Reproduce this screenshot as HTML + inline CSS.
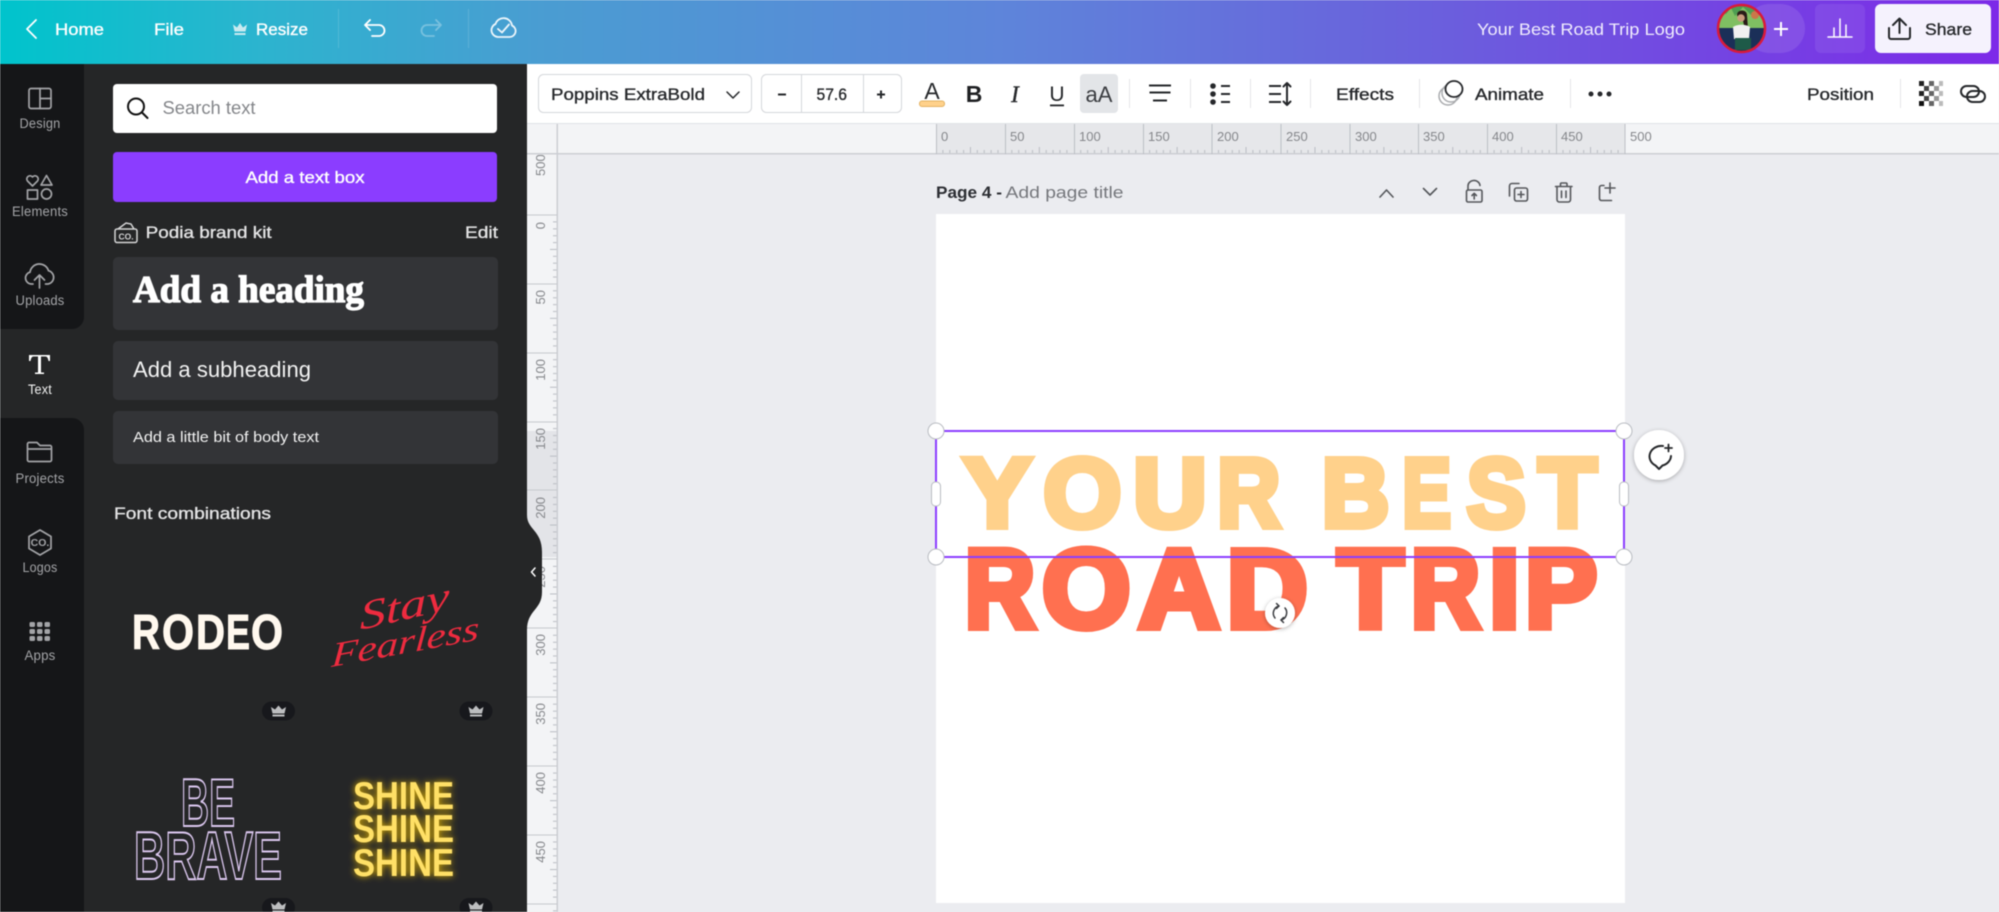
<!DOCTYPE html>
<html lang="en">
<head>
<meta charset="utf-8">
<title>Your Best Road Trip Logo</title>
<style>
html,body{margin:0;padding:0;background:#ebecf0;overflow:hidden;width:1999px;height:912px}
svg{display:block;filter:blur(.45px)}
text{font-family:"Liberation Sans",sans-serif}
.m{stroke-width:.35px;stroke:currentColor}
.wt{fill:#fff;color:#fff}
.rl{fill:#a3a4a7;font-size:13.5px;text-anchor:middle;letter-spacing:.2px}
.dk{fill:#26282b;color:#26282b;font-size:17px}
.ru{fill:#85878b;font-size:13px}
.ic{fill:none;stroke:#a3a4a7;stroke-width:1.7;stroke-linecap:round;stroke-linejoin:round}
.bk{fill:none;stroke:#26282b;stroke-width:2;stroke-linecap:round;stroke-linejoin:round}
.gy{fill:none;stroke:#55575b;stroke-width:1.6;stroke-linecap:round;stroke-linejoin:round}
.wl{fill:none;stroke:#fff;stroke-width:1.8;stroke-linecap:round;stroke-linejoin:round}
.y{fill:#ffd18b;stroke:#ffd18b;stroke-width:7;font-size:97.4px;font-weight:700;stroke-linejoin:miter}
.r{fill:#ff7050;stroke:#ff7050;stroke-width:8;font-size:110.5px;font-weight:700;stroke-linejoin:miter}
.sh{fill:#ffe066;font-size:39px;font-weight:700;filter:url(#glow)}
.ro{fill:#fff8ee;stroke:#fff8ee;stroke-width:1;font-size:49px;font-weight:700}
.so{font-family:"Liberation Serif",serif;font-style:italic;fill:#ee2b3f}
.bb{fill:none;stroke:#dcc8f0;stroke-width:1.9;font-size:68px;font-weight:700}
</style>
</head>
<body>
<svg width="1999" height="912" viewBox="0 0 1999 912" xmlns="http://www.w3.org/2000/svg">
<defs>
<linearGradient id="tg" gradientUnits="userSpaceOnUse" x1="0" y1="40" x2="1999" y2="70">
<stop offset="0" stop-color="#00c4cc"/><stop offset=".13" stop-color="#2cb4cf"/><stop offset=".27" stop-color="#4a9dd2"/><stop offset=".5" stop-color="#5e85da"/><stop offset=".72" stop-color="#6b5fdd"/><stop offset="1" stop-color="#7d2ae8"/>
</linearGradient>
<pattern id="hticks" x="936" y="124" width="68.9" height="30" patternUnits="userSpaceOnUse">
<g stroke="#b9bcc2" stroke-width="1">
<path d="M6.9 26V30M13.8 26V30M20.7 26V30M27.6 26V30M34.45 23V30M41.3 26V30M48.2 26V30M55.1 26V30M62 26V30"/>
</g>
</pattern>
<pattern id="vticks" x="527" y="215" width="30" height="68.9" patternUnits="userSpaceOnUse">
<g stroke="#b9bcc2" stroke-width="1">
<path d="M26 6.9H30M26 13.8H30M26 20.7H30M26 27.6H30M23 34.45H30M26 41.3H30M26 48.2H30M26 55.1H30M26 62H30"/>
</g>
</pattern>
<filter id="glow" x="-30%" y="-40%" width="160%" height="180%">
<feGaussianBlur stdDeviation="3.5" result="b"/>
<feFlood flood-color="#e8b800"/><feComposite in2="b" operator="in" result="c"/>
<feMerge><feMergeNode in="c"/><feMergeNode in="SourceGraphic"/></feMerge>
</filter>
<filter id="sd" x="-40%" y="-40%" width="180%" height="180%"><feDropShadow dx="0" dy="1" stdDeviation="2" flood-color="#000" flood-opacity=".3"/></filter>
<clipPath id="av"><circle cx="1741.500" cy="28.500" r="23"/></clipPath>
<clipPath id="vr"><rect x="527" y="155" width="30" height="757"/></clipPath>
<g id="crown"><path d="M-6 2.500L-7.500 -4L-3.500 -1.500L0 -5.500L3.500 -1.500L7.500 -4L6 2.500Z" fill="#bdbec0"/><rect x="-6" y="3.500" width="12" height="2" fill="#bdbec0"/></g>
</defs>

<!-- canvas background -->
<rect width="1999" height="912" fill="#ebecf0"/>

<!-- toolbar -->
<rect x="527" y="64" width="1472" height="60" fill="#fff"/>
<rect x="527" y="123" width="1472" height="1.500" fill="#e1e3e7"/>

<!-- rulers -->
<rect x="527" y="124" width="1472" height="30" fill="#f3f4f6"/>
<rect x="936" y="124" width="689" height="30" fill="#e6e7ea"/>
<rect x="936" y="124" width="689" height="30" fill="url(#hticks)"/>
<rect x="527" y="154" width="30" height="758" fill="#f3f4f6"/>
<rect x="527" y="431" width="30" height="126" fill="#e3e4e8"/>
<rect x="527" y="215" width="30" height="697" fill="url(#vticks)"/>
<rect x="527" y="153" width="1472" height="1.500" fill="#ccced3"/>
<rect x="556.500" y="124" width="1.500" height="788" fill="#ccced3"/>
<path stroke="#bcbfc5" stroke-width="1" d="M936.500 124V154M1005.500 124V154M1074.500 124V154M1143.500 124V154M1212 124V154M1281 124V154M1350 124V154M1418.500 124V154M1487.500 124V154M1556.500 124V154M1625 124V154"/>
<path stroke="#c6c8cd" stroke-width="1" d="M527 215H557M527 284H557M527 353H557M527 422H557M527 490H557M527 559H557M527 628H557M527 697H557M527 766H557M527 835H557M527 904H557"/>
<g class="ru">
<text class="ru" x="941" y="141">0</text><text class="ru" x="1010" y="141">50</text><text class="ru" x="1079" y="141">100</text><text class="ru" x="1148" y="141">150</text><text class="ru" x="1217" y="141">200</text><text class="ru" x="1286" y="141">250</text><text class="ru" x="1355" y="141">300</text><text class="ru" x="1423" y="141">350</text><text class="ru" x="1492" y="141">400</text><text class="ru" x="1561" y="141">450</text><text class="ru" x="1630" y="141">500</text>
</g>
<g clip-path="url(#vr)">
<text class="ru" transform="translate(545,176) rotate(-90)">500</text>
<text class="ru" text-anchor="end" transform="translate(545,222) rotate(-90)">0</text>
<text class="ru" text-anchor="end" transform="translate(545,290) rotate(-90)">50</text>
<text class="ru" text-anchor="end" transform="translate(545,359) rotate(-90)">100</text>
<text class="ru" text-anchor="end" transform="translate(545,428) rotate(-90)">150</text>
<text class="ru" text-anchor="end" transform="translate(545,497) rotate(-90)">200</text>
<text class="ru" text-anchor="end" transform="translate(545,566) rotate(-90)">250</text>
<text class="ru" text-anchor="end" transform="translate(545,634) rotate(-90)">300</text>
<text class="ru" text-anchor="end" transform="translate(545,703) rotate(-90)">350</text>
<text class="ru" text-anchor="end" transform="translate(545,772) rotate(-90)">400</text>
<text class="ru" text-anchor="end" transform="translate(545,841) rotate(-90)">450</text>
</g>

<!-- page -->
<rect x="936" y="214" width="689" height="689" fill="#fff"/>
<text x="936" y="198" font-size="17" font-weight="700" fill="#2c2e33" textLength="66" lengthAdjust="spacingAndGlyphs">Page 4 -</text>
<text x="1005.500" y="198" font-size="17" fill="#75777c" textLength="118" lengthAdjust="spacingAndGlyphs">Add page title</text>

<!-- page header icons -->
<path class="gy" d="M1380 197l6.500-7 6.500 7M1423.500 188.500l6.500 6.500 6.500-6.500"/>
<g class="gy">
<rect x="1466.500" y="190" width="15.500" height="12" rx="1.500"/>
<path d="M1468 190v-3.500a6 5.500 0 0 1 12-1"/><path d="M1474.200 199v-5.500M1472 195.500l2.200-2.200 2.200 2.200"/>
<rect x="1514.500" y="188" width="13" height="13" rx="2"/><path d="M1519 183.500h-7a2.500 2.500 0 0 0-2.500 2.500v10M1518 194.500h6M1521 191.500v6"/>
<path d="M1555.500 186.500h16.500M1560.500 186v-2a1 1 0 0 1 1-1h4.500a1 1 0 0 1 1 1v2M1557 186.500v13a2.500 2.500 0 0 0 2.500 2.500h8.500a2.500 2.500 0 0 0 2.500-2.500v-13M1561.500 191v6.500M1566 191v6.500"/>
<path d="M1604 185.500h-2.500a2 2 0 0 0-2 2v11a2 2 0 0 0 2 2h10"/><path d="M1610 183v10M1605 188h10"/>
</g>

<!-- canvas text -->
<g class="y">
<text class="y" x="963.500" y="526.500" textLength="67.700" lengthAdjust="spacingAndGlyphs">Y</text>
<text class="y" x="1043.500" y="526.500" textLength="77.800" lengthAdjust="spacingAndGlyphs">O</text>
<text class="y" x="1133.300" y="526.500" textLength="73.500" lengthAdjust="spacingAndGlyphs">U</text>
<text class="y" x="1217.300" y="526.500" textLength="63" lengthAdjust="spacingAndGlyphs">R</text>
<text class="y" x="1321.900" y="526.500" textLength="67.400" lengthAdjust="spacingAndGlyphs">B</text>
<text class="y" x="1402.400" y="526.500" textLength="48.600" lengthAdjust="spacingAndGlyphs">E</text>
<text class="y" x="1466.900" y="526.500" textLength="58.700" lengthAdjust="spacingAndGlyphs">S</text>
<text class="y" x="1538.600" y="526.500" textLength="57.900" lengthAdjust="spacingAndGlyphs">T</text>
</g>
<g class="r">
<text class="r" x="965" y="627" textLength="69.900" lengthAdjust="spacingAndGlyphs">R</text>
<text class="r" x="1042.400" y="627" textLength="87.900" lengthAdjust="spacingAndGlyphs">O</text>
<text class="r" x="1139" y="627" textLength="80.200" lengthAdjust="spacingAndGlyphs">A</text>
<text class="r" x="1227" y="627" textLength="80.400" lengthAdjust="spacingAndGlyphs">D</text>
<text class="r" x="1337.800" y="627" textLength="65.400" lengthAdjust="spacingAndGlyphs">T</text>
<text class="r" x="1411.100" y="627" textLength="68.700" lengthAdjust="spacingAndGlyphs">R</text>
<text class="r" x="1489.500" y="627" textLength="29.800" lengthAdjust="spacingAndGlyphs">I</text>
<text class="r" x="1525.200" y="627" textLength="71.600" lengthAdjust="spacingAndGlyphs">P</text>
</g>

<!-- selection -->
<rect x="936" y="431" width="688" height="126" fill="none" stroke="#8b3dff" stroke-width="2"/>
<g fill="#fff" stroke="#b9bcc2" stroke-width="1">
<circle cx="936" cy="431" r="8"/><circle cx="1624" cy="431" r="8"/><circle cx="936" cy="557" r="8"/><circle cx="1624" cy="557" r="8"/>
<rect x="931.500" y="482" width="9" height="24" rx="4"/><rect x="1619.500" y="482" width="9" height="24" rx="4"/>
</g>
<circle cx="1280" cy="613" r="15" fill="#fff" filter="url(#sd)"/>
<g fill="none" stroke="#3a3c40" stroke-width="1.500" stroke-linecap="round" stroke-linejoin="round">
<path d="M1275 618a7.500 7.500 0 0 1 4-12"/><path d="M1276.500 603.500l2.500 2.500-2.500 2.500"/>
<path d="M1285 608a7.500 7.500 0 0 1-4 12"/><path d="M1283.500 622.500l-2.500-2.500 2.500-2.500"/>
</g>
<circle cx="1659" cy="455" r="25" fill="#fff" filter="url(#sd)"/>
<path d="M1663 446A12 10.500 0 0 0 1655.500 465.500l3.500 3.500 3.500-3.500A12 10.500 0 0 0 1671 456" fill="none" stroke="#26282b" stroke-width="2" stroke-linecap="round" stroke-linejoin="round"/>
<path d="M1665 448h7M1668.500 444.500v7" stroke="#26282b" stroke-width="1.800" stroke-linecap="round"/>

<!-- toolbar controls -->
<rect x="538.500" y="74.500" width="213" height="38" rx="5" fill="#fff" stroke="#d5d7db"/>
<text class="dk m" x="551" y="100" textLength="154" lengthAdjust="spacingAndGlyphs">Poppins ExtraBold</text>
<path class="bk" style="stroke-width:1.500" d="M727 92l6 6 6-6"/>
<rect x="761.500" y="74.500" width="140" height="38" rx="5" fill="#fff" stroke="#d5d7db"/>
<path stroke="#d5d7db" d="M801.500 75V112M863.500 75V112"/>
<path d="M778 94.500h8M877 94.500h8M881 90.500v8" stroke="#26282b" stroke-width="2"/>
<text class="dk m" x="816.500" y="100" textLength="30.500" lengthAdjust="spacingAndGlyphs">57.6</text>

<text x="932" y="99" text-anchor="middle" font-size="23" fill="#26282b">A</text>
<rect x="919.500" y="101" width="25" height="5.500" rx="2.500" fill="#ffd18b" stroke="#e3b160" stroke-width="1"/>
<text x="974" y="102" text-anchor="middle" font-size="23" font-weight="700" fill="#1f2023">B</text>
<text x="1015" y="102" text-anchor="middle" font-size="23" font-style="italic" style="font-family:'Liberation Serif',serif;stroke:#26282b;stroke-width:.4" fill="#26282b">I</text>
<text x="1057" y="101" text-anchor="middle" font-size="21" fill="#26282b">U</text>
<rect x="1050" y="104.500" width="14" height="1.800" fill="#26282b"/>
<rect x="1080" y="74" width="38" height="39" rx="4" fill="#e3e5e8"/>
<text x="1099" y="102" text-anchor="middle" font-size="22.500" fill="#3c3e42" textLength="27" lengthAdjust="spacingAndGlyphs">aA</text>
<path stroke="#e5e6e9" d="M1129.500 79V108M1190.500 79V108M1250.500 79V108M1310.500 79V108M1419.500 79V108M1570.500 79V108M1900.500 79V108"/>
<path d="M1149 85.500h22M1149.500 92.500h21M1153 100.500h14" stroke="#26282b" stroke-width="2"/>
<circle cx="1213" cy="86" r="2.800" fill="#26282b"/><circle cx="1213" cy="94" r="2.800" fill="#26282b"/><circle cx="1213" cy="102" r="2.800" fill="#26282b"/>
<path d="M1221 86h9M1221 94h9M1221 102h9" stroke="#26282b" stroke-width="2"/>
<path d="M1269 86h12M1269 94h12M1269 102h12" stroke="#26282b" stroke-width="2"/>
<path class="bk" d="M1287 83v22M1283.500 86.500l3.500-3.500 3.500 3.500M1283.500 101.500l3.500 3.500 3.500-3.500"/>
<text class="dk m" x="1336" y="100" textLength="58" lengthAdjust="spacingAndGlyphs">Effects</text>
<g fill="none" stroke="#a9abae" stroke-width="1.500"><circle cx="1448" cy="96" r="9"/><circle cx="1451" cy="93" r="9"/></g>
<ellipse cx="1454" cy="89" rx="8.500" ry="8" fill="#fff" stroke="#26282b" stroke-width="1.800"/>
<text class="dk m" x="1475" y="100" textLength="69" lengthAdjust="spacingAndGlyphs">Animate</text>
<circle cx="1591" cy="94" r="2.500" fill="#26282b"/><circle cx="1600" cy="94" r="2.500" fill="#26282b"/><circle cx="1609" cy="94" r="2.500" fill="#26282b"/>
<text class="dk m" x="1807" y="100" textLength="67" lengthAdjust="spacingAndGlyphs">Position</text>
<g>
<rect x="1919" y="81" width="5" height="5" fill="#222"/><rect x="1929" y="81" width="5" height="5" fill="#666"/><rect x="1939" y="81" width="4" height="5" fill="#bbb"/>
<rect x="1924" y="86" width="5" height="5" fill="#444"/><rect x="1934" y="86" width="5" height="5" fill="#999"/>
<rect x="1919" y="91" width="5" height="5" fill="#222"/><rect x="1929" y="91" width="5" height="5" fill="#666"/><rect x="1939" y="91" width="4" height="5" fill="#bbb"/>
<rect x="1924" y="96" width="5" height="5" fill="#444"/><rect x="1934" y="96" width="5" height="5" fill="#999"/>
<rect x="1919" y="101" width="5" height="5" fill="#111"/><rect x="1929" y="101" width="5" height="5" fill="#666"/><rect x="1939" y="101" width="4" height="5" fill="#bbb"/>
</g>
<g fill="none" stroke="#26282b" stroke-width="2"><rect x="1961" y="86" width="18" height="11" rx="5.500"/><rect x="1967" y="91" width="18" height="11" rx="5.500"/></g>

<!-- top bar -->
<rect width="1999" height="64" fill="url(#tg)"/>
<path class="wl" d="M36 20l-9 9 9 9"/>
<text class="wt m" x="55" y="35" font-size="17" textLength="49" lengthAdjust="spacingAndGlyphs">Home</text>
<text class="wt m" x="154" y="35" font-size="17" textLength="30" lengthAdjust="spacingAndGlyphs">File</text>
<path d="M234.500 31.500l-1.500-7 4 3 3-4.500 3 4.500 4-3-1.500 7zM234.500 33h11v2h-11z" fill="#c9eaf0"/>
<text class="wt m" x="256" y="35" font-size="17" textLength="52" lengthAdjust="spacingAndGlyphs">Resize</text>
<path stroke="#fff" stroke-opacity=".14" d="M338.500 9V48M468.500 9V48"/>
<path class="wl" d="M370 20l-5 5 5 5M365 25h14a5.500 5.500 0 0 1 0 11h-7"/>
<path class="wl" opacity=".3" d="M436 20l5 5-5 5M441 25h-14a5.500 5.500 0 0 0 0 11h7"/>
<path class="wl" opacity=".9" d="M498 37h11.500a6 6 0 0 0 2.500-11.500a8.500 8.500 0 0 0-16.500-1.500a6.800 6.800 0 0 0 2.500 13zM498 29l4 3.500 7-8"/>
<text x="1477" y="35" font-size="17" fill="#f0ecfd" textLength="208" lengthAdjust="spacingAndGlyphs">Your Best Road Trip Logo</text>
<rect x="1745" y="4" width="60" height="49" rx="24.500" fill="#fff" fill-opacity=".1"/>
<g clip-path="url(#av)">
<rect x="1717" y="4" width="50" height="49" fill="#4e9d52"/>
<path d="M1718 10l8 4 5-6 4 8 8-9 8 8 8-4 6 4v14h-47z" fill="#7fbf62"/>
<circle cx="1755" cy="15" r="4" fill="#c9784a"/>
<rect x="1717" y="28" width="50" height="25" fill="#1b2f58"/>
<path d="M1737 15c0-6 10-6 10 0l1 14h-3l-2-8h-4z" fill="#2a1c18"/>
<circle cx="1741" cy="18" r="3.800" fill="#c99a7c"/>
<path d="M1733 27c4-3 13-3 17 0l-1 12h-15z" fill="#f1f1f1"/>
<rect x="1735" y="38" width="16" height="12" fill="#1e5a48"/>
</g>
<circle cx="1741.500" cy="28.500" r="23.500" fill="none" stroke="#d91a3a" stroke-width="2.500"/>
<path d="M1781 22v14M1774 29h14" stroke="#fff" stroke-width="2"/>
<rect x="1815" y="4" width="50" height="49" rx="6" fill="#fff" fill-opacity=".08"/>
<path class="wl" style="stroke-width:1.500" d="M1828 37h24M1834 36v-8M1840 36v-17M1846 36v-11"/>
<rect x="1875" y="4" width="116" height="49" rx="6" fill="#f5f2fd"/>
<path class="bk" d="M1889 28v9a2 2 0 0 0 2 2h17a2 2 0 0 0 2-2v-9M1899.500 33V19M1893 25l6.500-6.500 6.500 6.500"/>
<text class="dk m" x="1925" y="35" textLength="47" lengthAdjust="spacingAndGlyphs">Share</text>

<!-- side panel -->
<rect x="0" y="64" width="527" height="848" fill="#252627"/>
<path d="M527 515C527 530 542 530 542 552V592C542 610 527 610 527 630Z" fill="#252627"/>
<path class="wl" style="stroke-width:1.500" d="M535 568l-3.500 4 3.500 4"/>
<!-- rail -->
<path d="M0 64H84V317a12 12 0 0 1-12 12H0Z" fill="#151618"/>
<path d="M0 418H72a12 12 0 0 1 12 12V912H0Z" fill="#151618"/>

<!-- rail icons -->
<g class="ic">
<rect x="29" y="88.500" width="22" height="20" rx="2"/><path d="M40 88.500v20M40 98.500h11"/>
<path d="M32.500 186l-5-5a3 3 0 0 1 5-4a3 3 0 0 1 5 4z"/><path d="M46.500 175.500l5.500 9.500h-11z"/>
<rect x="27.500" y="190" width="10" height="9"/><circle cx="46.500" cy="194" r="5"/>
<path d="M33 284h-1.500a6 6 0 0 1-1.500-11.800a9.500 9.500 0 0 1 18.500-1.500a6.800 6.800 0 0 1-.5 13.300h-2.500M39.500 288V275M34.500 280l5-5 5 5"/>
<path d="M27.500 444a1.500 1.500 0 0 1 1.500-1.500h8l3 3h10a1.500 1.500 0 0 1 1.500 1.500v13a1.500 1.500 0 0 1-1.500 1.500h-21a1.500 1.500 0 0 1-1.500-1.500zM27.500 449h24"/>
<path d="M40 530l11 6.500v12L40 555l-11-6.500v-12z"/>
</g>
<text x="40" y="546" text-anchor="middle" font-size="10.500" font-weight="700" fill="#a3a4a7">CO.</text>
<g fill="#fff">
<path d="M29 355h21v6h-1.500c-.5-3-1.500-4.500-3-4.500h-4.500v16h3v1.500h-9v-1.500h3v-16h-4.500c-1.500 0-2.500 1.500-3 4.500h-1.500z"/>
</g>
<g fill="#a3a4a7">
<rect x="29.500" y="622" width="5.500" height="5" rx="1.500"/><rect x="37" y="622" width="5.500" height="5" rx="1.500"/><rect x="44.500" y="622" width="5.500" height="5" rx="1.500"/>
<rect x="29.500" y="629" width="5.500" height="5" rx="1.500"/><rect x="37" y="629" width="5.500" height="5" rx="1.500"/><rect x="44.500" y="629" width="5.500" height="5" rx="1.500"/>
<rect x="29.500" y="636" width="5.500" height="5" rx="1.500"/><rect x="37" y="636" width="5.500" height="5" rx="1.500"/><rect x="44.500" y="636" width="5.500" height="5" rx="1.500"/>
</g>
<text class="rl" x="40" y="128" textLength="41" lengthAdjust="spacingAndGlyphs">Design</text>
<text class="rl" x="40" y="216" textLength="56" lengthAdjust="spacingAndGlyphs">Elements</text>
<text class="rl" x="40" y="305" textLength="49" lengthAdjust="spacingAndGlyphs">Uploads</text>
<text class="rl" x="40" y="394" textLength="24" lengthAdjust="spacingAndGlyphs" style="fill:#f0f0f0">Text</text>
<text class="rl" x="40" y="483" textLength="49" lengthAdjust="spacingAndGlyphs">Projects</text>
<text class="rl" x="40" y="572" textLength="35" lengthAdjust="spacingAndGlyphs">Logos</text>
<text class="rl" x="40" y="660" textLength="31" lengthAdjust="spacingAndGlyphs">Apps</text>

<!-- panel contents -->
<rect x="113" y="84" width="384" height="49" rx="4" fill="#fff"/>
<circle cx="136" cy="106.500" r="8" fill="none" stroke="#111" stroke-width="2"/>
<path d="M142 112.500l5.500 5.500" stroke="#111" stroke-width="2" stroke-linecap="round"/>
<text x="162.500" y="114" font-size="18" fill="#84868a" textLength="93" lengthAdjust="spacingAndGlyphs">Search text</text>
<rect x="113" y="152" width="384" height="50" rx="4" fill="#8b3dff"/>
<text class="wt m" x="245.500" y="183" font-size="17" textLength="119" lengthAdjust="spacingAndGlyphs">Add a text box</text>

<path d="M118 229l8-6 5 1 3 5" fill="none" stroke="#d5d5d6" stroke-width="1.500"/>
<rect x="115" y="229" width="22" height="13.500" rx="2" fill="#252627" stroke="#d5d5d6" stroke-width="1.500"/>
<text x="126" y="239.500" text-anchor="middle" font-size="8.500" font-weight="700" fill="#d5d5d6">CO.</text>
<text class="m" x="145.700" y="238" font-size="17" style="fill:#e4e4e5;color:#e4e4e5" textLength="126" lengthAdjust="spacingAndGlyphs">Podia brand kit</text>
<text class="m" x="465" y="238" font-size="17" style="fill:#e4e4e5;color:#e4e4e5" textLength="33" lengthAdjust="spacingAndGlyphs">Edit</text>

<rect x="113" y="257" width="385" height="73" rx="5" fill="#333437"/>
<text x="133" y="302" font-size="38" font-weight="700" style="font-family:'Liberation Serif',serif;stroke:#fff;stroke-width:1.300" fill="#fff" textLength="231" lengthAdjust="spacingAndGlyphs">Add a heading</text>
<rect x="113" y="341" width="385" height="59" rx="5" fill="#333437"/>
<text x="133" y="377" font-size="22" fill="#f2f2f2" textLength="178" lengthAdjust="spacingAndGlyphs">Add a subheading</text>
<rect x="113" y="411" width="385" height="53" rx="5" fill="#333437"/>
<text x="133" y="442" font-size="15" fill="#f2f2f2" textLength="186" lengthAdjust="spacingAndGlyphs">Add a little bit of body text</text>
<text class="m" x="114" y="519" font-size="17" style="fill:#e4e4e5;color:#e4e4e5" textLength="157" lengthAdjust="spacingAndGlyphs">Font combinations</text>

<!-- combos -->
<text class="ro" x="132" y="649" textLength="28" lengthAdjust="spacingAndGlyphs">R</text>
<text class="ro" x="162" y="649" textLength="32" lengthAdjust="spacingAndGlyphs">O</text>
<text class="ro" x="196" y="649" textLength="29" lengthAdjust="spacingAndGlyphs">D</text>
<text class="ro" x="226" y="649" textLength="24" lengthAdjust="spacingAndGlyphs">E</text>
<text class="ro" x="251" y="649" textLength="32" lengthAdjust="spacingAndGlyphs">O</text>
<text class="so" transform="translate(360,630) rotate(-13) skewX(-12)" font-size="40" textLength="92" lengthAdjust="spacingAndGlyphs">Stay</text>
<text class="so" transform="translate(331,667) rotate(-10.500) skewX(-14)" font-size="34" textLength="150" lengthAdjust="spacingAndGlyphs">Fearless</text>
<rect x="262" y="701.500" width="33" height="19" rx="9.500" fill="#17181c"/>
<rect x="459.500" y="701.500" width="33" height="19" rx="9.500" fill="#17181c"/>
<rect x="262" y="898" width="33" height="19" rx="9.500" fill="#17181c"/>
<rect x="459.500" y="898" width="33" height="19" rx="9.500" fill="#17181c"/>
<use href="#crown" x="278.500" y="711"/><use href="#crown" x="476" y="711"/>
<use href="#crown" x="278.500" y="907"/><use href="#crown" x="476" y="907"/>
<text class="bb" x="181" y="826" textLength="54" lengthAdjust="spacingAndGlyphs">BE</text>
<text class="bb" x="134" y="879" textLength="148" lengthAdjust="spacingAndGlyphs">BRAVE</text>
<text class="sh" x="353" y="809" textLength="101" lengthAdjust="spacingAndGlyphs">SHINE</text>
<text class="sh" x="353" y="842" textLength="101" lengthAdjust="spacingAndGlyphs">SHINE</text>
<text class="sh" x="353" y="876" textLength="101" lengthAdjust="spacingAndGlyphs">SHINE</text>
</svg>
</body>
</html>
